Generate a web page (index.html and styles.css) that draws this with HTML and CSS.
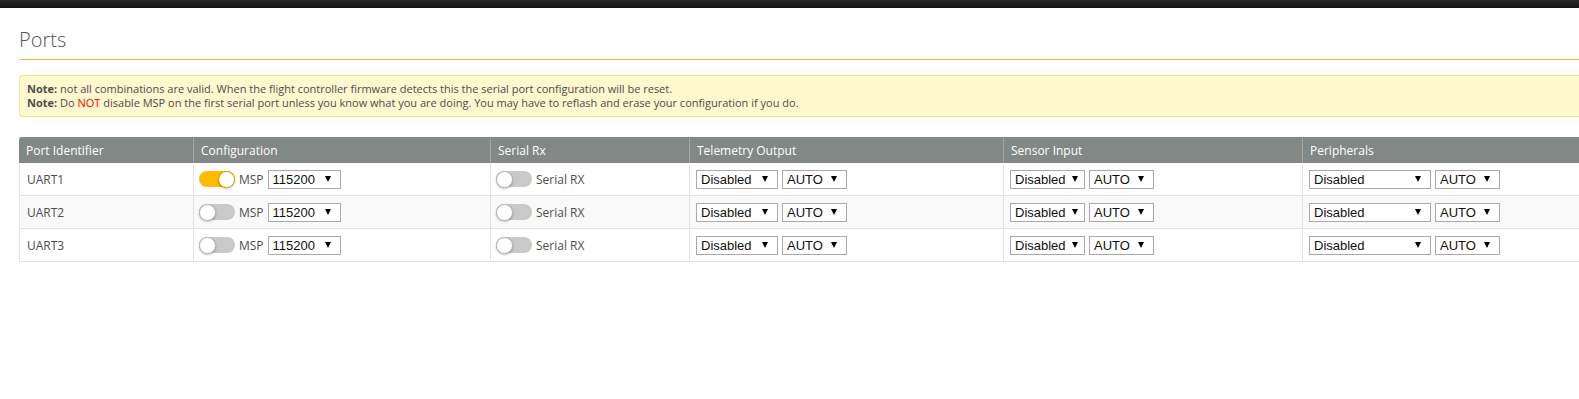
FILE: index.html
```html
<!DOCTYPE html>
<html>
<head>
    <meta name="viewport" content="width=device-width, initial-scale=1">
    <link rel="stylesheet" href="styles.css">
</head>

<body>

<div class="topbar"></div>

<div class="tab-ports">

    <div class="tab_title">Ports</div>

    <div class="note">
        <p><b>Note:</b> not all combinations are valid. When the flight controller firmware detects this the serial port configuration will be reset.</p>
        <p><b>Note:</b> Do <span class="red">NOT</span> disable MSP on the first serial port unless you know what you are doing. You may have to reflash and erase your configuration if you do.</p>
    </div>

    <table class="ports">
        <colgroup>
            <col class="c-ident">
            <col class="c-config">
            <col class="c-rx">
            <col class="c-telem">
            <col class="c-sensor">
            <col class="c-periph">
        </colgroup>
        <thead>
        <tr>
            <th>Port Identifier</th>
            <th>Configuration</th>
            <th>Serial Rx</th>
            <th>Telemetry Output</th>
            <th>Sensor Input</th>
            <th>Peripherals</th>
        </tr>
        </thead>
        <tbody>
        <tr>
            <td>UART1</td>
            <td><div class="cell"><span class="switch on"><span class="knob"></span></span><span class="lbl">MSP</span><span class="select w-baud">115200<i class="arrow"></i></span></div></td>
            <td><div class="cell"><span class="switch"><span class="knob"></span></span><span class="lbl">Serial RX</span></div></td>
            <td><div class="cell"><span class="select w-telem">Disabled<i class="arrow"></i></span><span class="select w-auto">AUTO<i class="arrow"></i></span></div></td>
            <td><div class="cell"><span class="select w-sensor">Disabled<i class="arrow"></i></span><span class="select w-auto">AUTO<i class="arrow"></i></span></div></td>
            <td><div class="cell"><span class="select w-periph">Disabled<i class="arrow"></i></span><span class="select w-auto">AUTO<i class="arrow"></i></span></div></td>
        </tr>
        <tr>
            <td>UART2</td>
            <td><div class="cell"><span class="switch"><span class="knob"></span></span><span class="lbl">MSP</span><span class="select w-baud">115200<i class="arrow"></i></span></div></td>
            <td><div class="cell"><span class="switch"><span class="knob"></span></span><span class="lbl">Serial RX</span></div></td>
            <td><div class="cell"><span class="select w-telem">Disabled<i class="arrow"></i></span><span class="select w-auto">AUTO<i class="arrow"></i></span></div></td>
            <td><div class="cell"><span class="select w-sensor">Disabled<i class="arrow"></i></span><span class="select w-auto">AUTO<i class="arrow"></i></span></div></td>
            <td><div class="cell"><span class="select w-periph">Disabled<i class="arrow"></i></span><span class="select w-auto">AUTO<i class="arrow"></i></span></div></td>
        </tr>
        <tr>
            <td>UART3</td>
            <td><div class="cell"><span class="switch"><span class="knob"></span></span><span class="lbl">MSP</span><span class="select w-baud">115200<i class="arrow"></i></span></div></td>
            <td><div class="cell"><span class="switch"><span class="knob"></span></span><span class="lbl">Serial RX</span></div></td>
            <td><div class="cell"><span class="select w-telem">Disabled<i class="arrow"></i></span><span class="select w-auto">AUTO<i class="arrow"></i></span></div></td>
            <td><div class="cell"><span class="select w-sensor">Disabled<i class="arrow"></i></span><span class="select w-auto">AUTO<i class="arrow"></i></span></div></td>
            <td><div class="cell"><span class="select w-periph">Disabled<i class="arrow"></i></span><span class="select w-auto">AUTO<i class="arrow"></i></span></div></td>
        </tr>
        </tbody>
    </table>

</div>

</body>
</html>
```

FILE: styles.css
```css
body {
    margin: 0;
    font-family: "Open Sans", Arial, sans-serif;
    color: #4d4d4d;
    background: #fff;
    overflow: hidden;
}

.topbar {
    height: 8px;
    background: linear-gradient(#2a2a2a, #141414);
}

.tab-ports {
    margin-left: 19px;
    width: 1600px;
}

.tab_title {
    margin-top: 20px;
    font-size: 20px;
    font-weight: 300;
    line-height: 24px;
    color: #555;
    padding-bottom: 7px;
    border-bottom: 1px solid #efbf2d;
}

.note {
    margin-top: 15px;
    padding: 6px 7px;
    background-color: #fff7cd;
    border: 1px solid #fde17a;
    border-radius: 3px;
    font-size: 11px;
    line-height: 14px;
    color: #4d4d4d;
}

.note p {
    margin: 0;
}

.note .red {
    color: #f00;
}

table.ports {
    margin-top: 20px;
    width: 1600px;
    table-layout: fixed;
    border-collapse: separate;
    border-spacing: 0;
    font-size: 12px;
}

.c-ident { width: 174px; }
.c-config { width: 297px; }
.c-rx { width: 199px; }
.c-telem { width: 314px; }
.c-sensor { width: 299px; }

table.ports th {
    background-color: #828885;
    color: #fff;
    font-weight: 400;
    text-align: left;
    height: 26px;
    padding: 0 0 0 7px;
    border-left: 1px solid #a3a7a5;
}

table.ports th:first-child {
    border-left: none;
    border-top-left-radius: 3px;
}

table.ports td {
    height: 32px;
    padding: 0 0 0 6px;
    border-bottom: 1px solid #e2e2e2;
    border-left: 1px solid #e2e2e2;
    color: #4d4d4d;
}

table.ports td:first-child {
    padding-left: 7px;
}

table.ports tbody tr:nth-child(even) td {
    background-color: #f9f9f9;
}

.cell {
    display: flex;
    align-items: center;
    gap: 4px;
}

.switch {
    position: relative;
    display: inline-block;
    width: 36px;
    height: 16px;
    border-radius: 8px;
    background: #c9c9c9;
    flex: none;
    margin-left: -1px;
}

.switch .knob {
    position: absolute;
    left: 0;
    top: 0;
    width: 15px;
    height: 15px;
    border-radius: 50%;
    background: #fff;
    border: 1px solid #b5b5b5;
    box-shadow: 0 1px 2px rgba(0, 0, 0, 0.25);
    box-sizing: content-box;
    margin: -0.5px 0 0 0;
}

.switch.on {
    background: #ffbb00;
}

.switch.on .knob {
    left: auto;
    right: 0;
    border-color: #d99e00;
}

.select {
    display: inline-flex;
    align-items: center;
    justify-content: space-between;
    box-sizing: border-box;
    height: 19px;
    padding: 0 9px 0 4px;
    border: 1px solid #a9a9a9;
    background: #fff;
    font-family: "Liberation Sans", Arial, sans-serif;
    font-size: 13px;
    color: #111;
    flex: none;
}

.select .arrow {
    width: 0;
    height: 0;
    margin-left: 6px;
    border-left: 3px solid transparent;
    border-right: 3px solid transparent;
    border-top: 6px solid #000;
}

.w-baud { width: 73px; }
.w-telem { width: 82px; }
.w-sensor { width: 75px; padding-right: 8px; }
.w-periph { width: 122px; }
.w-auto { width: 65px; }
```
